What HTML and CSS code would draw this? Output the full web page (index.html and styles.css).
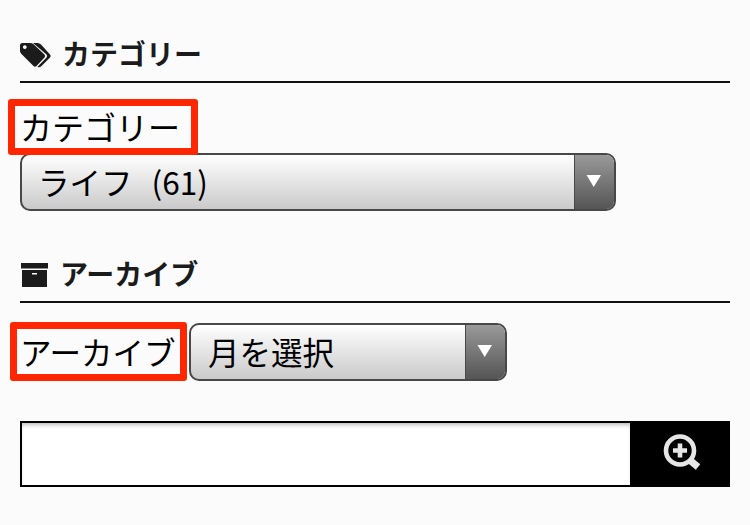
FILE: index.html
```html
<!DOCTYPE html>
<html lang="ja">
<head>
<meta charset="utf-8">
<title>カテゴリー / アーカイブ</title>
<link rel="stylesheet" href="styles.css">
</head>
<body>
<section class="widget category">
  <h2 class="heading">
    <svg class="icon" width="32" height="28" viewBox="0 0 32 28"><path fill="#1b1b1b" d="M0 3.500Q0 1 2.500 1H10Q12 1 13.500 2.300L24.500 12.500Q26 14 24.500 15.500L16.500 24Q15 25.500 13.500 24L1.500 12Q0 10.500 0 9ZM4.800 3.200a1.900 1.900 0 1 0 .01 0ZM13 1h4.500q2 0 3.500 1.500l9 10q1.500 1.500 0 3L21 24.500q-1.600 1.500-3.500 0.300l9-9.200q1.300-1.600 0-3Z" fill-rule="evenodd"/></svg>
    <span class="title">カテゴリー</span>
  </h2>
  <div class="field stacked">
    <label class="label marked">カテゴリー</label>
    <div class="select wide"><span class="value">ライフ&nbsp;&nbsp;(61)</span><span class="toggle"><svg width="16" height="14" viewBox="0 0 16 14"><path fill="#fff" d="M0.500 1H15L7.700 13Z"/></svg></span></div>
  </div>
</section>
<section class="widget archive">
  <h2 class="heading">
    <svg class="icon" width="30" height="28" viewBox="0 0 30 28"><path fill="#1b1b1b" fill-rule="evenodd" d="M1 1H28V6.500H1ZM2 8H27V25H2ZM12 11v1.500h5V11Z"/></svg>
    <span class="title">アーカイブ</span>
  </h2>
  <div class="field inline">
    <label class="label marked">アーカイブ</label>
    <div class="select month"><span class="value">月を選択</span><span class="toggle"><svg width="16" height="14" viewBox="0 0 16 14"><path fill="#fff" d="M0.500 1H15L7.700 13Z"/></svg></span></div>
  </div>
</section>
<form class="search">
  <input class="query" type="text" aria-label="検索">
  <button class="submit" type="button" aria-label="検索"><svg width="40" height="40" viewBox="0 0 40 40" fill="none" stroke="#e6e6e6"><circle cx="18" cy="17.500" r="14" stroke-width="4.600"/><path stroke-width="4.600" d="M18 10.500v14M11 17.500h14"/><path stroke-width="7" d="M27 26.500L36 34"/></svg></button>
</form>
</body>
</html>
```
FILE: styles.css
```css
*, *::after { box-sizing: border-box; }

body {
  margin: 0;
  padding: 36px 20px 0;
  height: 525px;
  overflow: hidden;
  background: #fbfbfb;
  color: #000;
  font-family: "Noto Sans CJK JP", sans-serif;
}

.heading {
  display: flex;
  align-items: flex-start;
  height: 47px;
  margin: 0;
  border-bottom: 2px solid #111;
  color: #1b1b1b;
  font-size: 28px;
  font-weight: 700;
  line-height: 35px;
}

.icon { flex: none; margin: 6px 10px 0 0; }

.label {
  position: relative;
  display: block;
  width: 160px;
  font-size: 31.5px;
  white-space: nowrap;
}

.marked::after {
  content: "";
  position: absolute;
  border: 7px solid #ff2600;
  border-radius: 3px;
}

.stacked { padding-top: 22px; }
.stacked .label { height: 48px; font-size: 32px; line-height: 43px; }
.stacked .marked::after { left: -12px; top: -6px; width: 190px; height: 56px; }

.archive { margin-top: 45px; }
.inline { display: flex; padding-top: 20px; }
.inline .label { width: 169px; line-height: 56px; }
.inline .marked::after { left: -10px; top: -1px; width: 177px; height: 59px; }

.select {
  display: flex;
  height: 58px;
  border: 2px solid #484848;
  border-radius: 10px;
  overflow: hidden;
  background: linear-gradient(#fff, #cacaca);
  color: #000;
  font-size: 31.5px;
  line-height: 52px;
  white-space: nowrap;
}
.wide { width: 596px; word-spacing: 2.5px; }
.month { width: 318px; }
.value { flex: 1; padding-left: 17px; }
.wide .value { padding-left: 16px; }

.toggle {
  display: flex;
  justify-content: center;
  width: 40px;
  padding-top: 19px;
  padding-right: 2px;
  border-left: 1px solid #484848;
  background: linear-gradient(#999, #555);
}

.search {
  display: flex;
  width: 710px;
  height: 66px;
  margin-top: 40px;
}
.query {
  flex: 1;
  min-width: 0;
  border: 2px solid #000;
  border-right: 0;
  border-radius: 0;
  outline: none;
  background: #fff;
  box-shadow: inset 0 4px 4px -2px #bbb;
}
.submit {
  display: flex;
  width: 100px;
  padding: 12px 0 0 32px;
  border: 0;
  background: #000;
}
```
